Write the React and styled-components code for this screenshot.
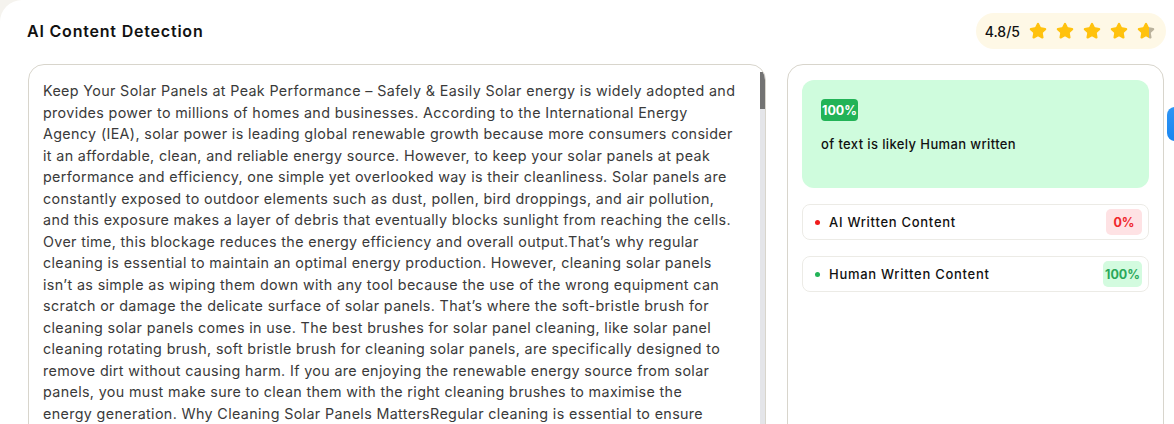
import React from "react";
import styled, { createGlobalStyle } from "styled-components";

const Global = createGlobalStyle`
  html, body { margin: 0; padding: 0; background: #f5f3ee; }
  body { font-family: Inter, "Open Sans", sans-serif; color: #1a1a1a; }
  * { box-sizing: border-box; }
`;

const Card = styled.div`
  background: #fff;
  border-top-left-radius: 22px;
  min-height: 424px;
  padding: 13px 8px 0 27px;
  position: relative;
  overflow: hidden;
`;

const Header = styled.div`
  display: flex;
  align-items: center;
  justify-content: space-between;
  height: 36px;
  margin-bottom: 15px;
`;

const Title = styled.h1`
  margin: 0;
  font-size: 16px;
  font-weight: 600;
  color: #111;
  letter-spacing: 0.8px;
`;

const Rating = styled.div`
  display: flex;
  align-items: center;
  gap: 9px;
  height: 36px;
  padding: 0 11px 0 9px;
  border-radius: 18px;
  background: #fef8e6;
  font-size: 14px;
  font-weight: 500;
  color: #111;
`;

const Stars = styled.div`
  display: flex;
  gap: 9px;
`;

const Grid = styled.div`
  display: grid;
  grid-template-columns: 738px 377px;
  gap: 21px;
  margin-left: 1px;
`;

const Panel = styled.div`
  position: relative;
  border: 1px solid #d8d5cc;
  border-radius: 16px;
  height: 400px;
  overflow: hidden;
  background: #fff;
`;

const TextBody = styled.div`
  padding: 15px 0 0 14px;
  white-space: pre;
  font-size: 14.3px;
  line-height: 21.5px;
  color: #3a3a3a;
  letter-spacing: 0.36px;
`;

const ScrollTrack = styled.div`
  position: absolute;
  right: 0;
  top: 7px;
  bottom: 0;
  width: 5px;
  background: #e4e5e9;
`;

const ScrollThumb = styled.div`
  height: 37px;
  background: #737373;
`;

const ResultPanel = styled(Panel)`
  padding: 15px 14px;
  display: flex;
  flex-direction: column;
  gap: 16px;
`;

const Summary = styled.div`
  background: #cffcdd;
  border-radius: 12px;
  height: 108px;
  padding: 19px 19px;
  display: flex;
  flex-direction: column;
  align-items: flex-start;
  gap: 15px;
`;

const Badge = styled.span`
  display: inline-flex;
  align-items: center;
  justify-content: center;
  height: ${p => p.$h || 22}px;
  padding: 0 ${p => p.$px || 2}px;
  min-width: ${p => p.$w || 0}px;
  border-radius: ${p => p.$r || 4}px;
  background: ${p => p.$bg};
  color: ${p => p.$fg};
  font-size: 12.5px;
  font-weight: 700;
`;

const SummaryText = styled.div`
  font-size: 13px;
  font-weight: 500;
  color: #111;
  letter-spacing: 0.38px;
`;

const Row = styled.div`
  display: flex;
  align-items: center;
  height: 36px;
  border: 1px solid #ecebe6;
  border-radius: 8px;
  padding: 0 6px 0 12px;
`;

const Dot = styled.span`
  width: 5px;
  height: 5px;
  border-radius: 50%;
  background: ${p => p.$c};
  margin-right: 9px;
`;

const RowLabel = styled.span`
  flex: 1;
  font-size: 13px;
  font-weight: 500;
  color: #111;
  letter-spacing: 0.72px;
`;

const SideTab = styled.div`
  position: absolute;
  right: -10px;
  top: 107px;
  width: 17px;
  height: 34px;
  border-radius: 8px;
  background: linear-gradient(180deg, #2f96f5, #1a86f0);
`;

const STAR =
  "M11.525 2.295a.53.53 0 0 1 .95 0l2.31 4.679a2.123 2.123 0 0 0 1.595 1.16l5.166.756a.53.53 0 0 1 .294.904l-3.736 3.638a2.123 2.123 0 0 0-.611 1.878l.882 5.14a.53.53 0 0 1-.771.56l-4.618-2.428a2.122 2.122 0 0 0-1.973 0L6.396 21.01a.53.53 0 0 1-.77-.56l.881-5.139a2.122 2.122 0 0 0-.611-1.879L2.16 9.795a.53.53 0 0 1 .294-.906l5.165-.755a2.122 2.122 0 0 0 1.597-1.16z";

function Star({ partial }) {
  const id = "pg";
  return (
    <svg width="18" height="18" viewBox="0 0 24 24">
      {partial && (
        <defs>
          <linearGradient id={id} x1="0" x2="1" y1="0" y2="0">
            <stop offset="72%" stopColor="#ffc20e" />
            <stop offset="72%" stopColor="#bab29c" />
          </linearGradient>
        </defs>
      )}
      <path
        d={STAR}
        fill={partial ? `url(#${id})` : "#ffc20e"}
        stroke={partial ? `url(#${id})` : "#ffc20e"}
        strokeWidth="2"
        strokeLinejoin="round"
      />
    </svg>
  );
}

const LINES = [
  "Keep Your Solar Panels at Peak Performance – Safely & Easily Solar energy is widely adopted and",
  "provides power to millions of homes and businesses. According to the International Energy",
  "Agency (IEA), solar power is leading global renewable growth because more consumers consider",
  "it an affordable, clean, and reliable energy source. However, to keep your solar panels at peak",
  "performance and efficiency, one simple yet overlooked way is their cleanliness. Solar panels are",
  "constantly exposed to outdoor elements such as dust, pollen, bird droppings, and air pollution,",
  "and this exposure makes a layer of debris that eventually blocks sunlight from reaching the cells.",
  "Over time, this blockage reduces the energy efficiency and overall output.That’s why regular",
  "cleaning is essential to maintain an optimal energy production. However, cleaning solar panels",
  "isn’t as simple as wiping them down with any tool because the use of the wrong equipment can",
  "scratch or damage the delicate surface of solar panels. That’s where the soft-bristle brush for",
  "cleaning solar panels comes in use. The best brushes for solar panel cleaning, like solar panel",
  "cleaning rotating brush, soft bristle brush for cleaning solar panels, are specifically designed to",
  "remove dirt without causing harm. If you are enjoying the renewable energy source from solar",
  "panels, you must make sure to clean them with the right cleaning brushes to maximise the",
  "energy generation. Why Cleaning Solar Panels MattersRegular cleaning is essential to ensure",
  "that your solar panels keep working at their best and deliver maximum energy output.",
];

export default function App() {
  return (
    <>
      <Global />
      <Card>
        <Header>
          <Title>AI Content Detection</Title>
          <Rating>
            <span>4.8/5</span>
            <Stars>
              <Star />
              <Star />
              <Star />
              <Star />
              <Star partial />
            </Stars>
          </Rating>
        </Header>
        <Grid>
          <Panel>
            <TextBody>{LINES.join("\n")}</TextBody>
            <ScrollTrack>
              <ScrollThumb />
            </ScrollTrack>
          </Panel>
          <ResultPanel>
            <Summary>
              <Badge $bg="#22b357" $fg="#fff" $h={22} $px={1}>100%</Badge>
              <SummaryText>of text is likely Human written</SummaryText>
            </Summary>
            <Row>
              <Dot $c="#f01b1b" />
              <RowLabel>AI Written Content</RowLabel>
              <Badge $bg="#fee2e4" $fg="#f0282d" $h={26} $w={36} $r={5}>0%</Badge>
            </Row>
            <Row>
              <Dot $c="#22b357" />
              <RowLabel>Human Written Content</RowLabel>
              <Badge $bg="#d3fbdf" $fg="#2aa85a" $h={26} $w={36} $r={5}>100%</Badge>
            </Row>
          </ResultPanel>
        </Grid>
        <SideTab />
      </Card>
    </>
  );
}
